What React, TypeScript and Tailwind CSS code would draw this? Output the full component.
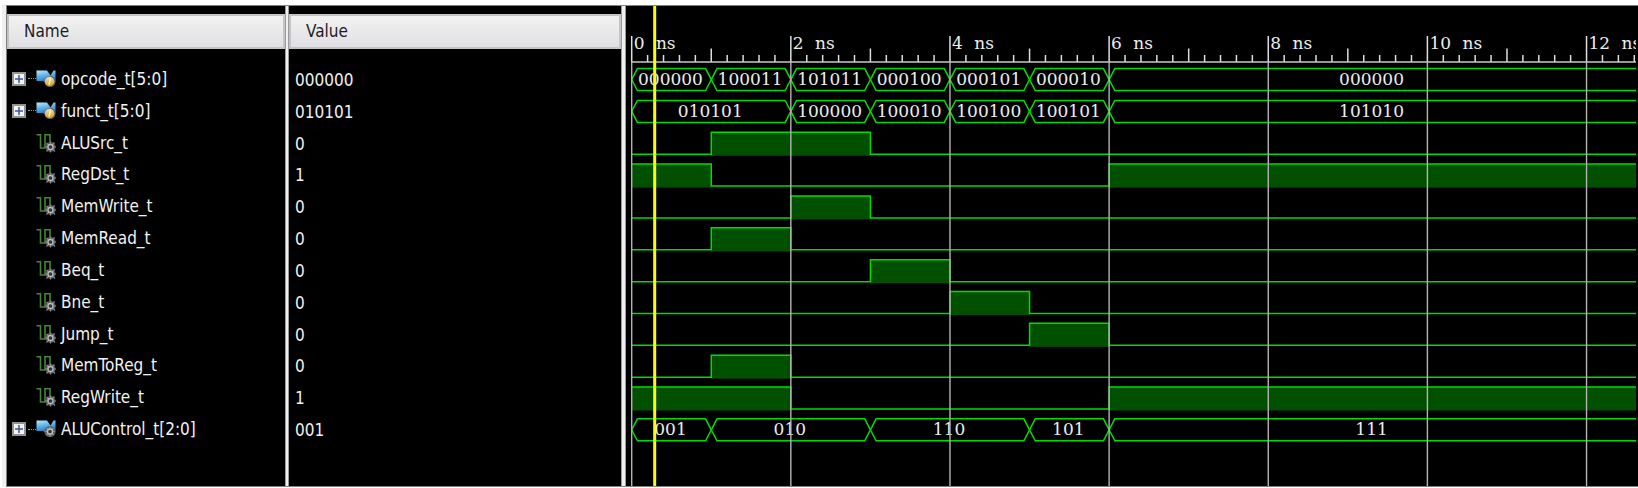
import React, { useLayoutEffect, useRef, useState } from "react";

type Segment = { from: number; to: number | null; value: string };
type Signal = {
  name: string;
  value: string;
  kind: "input-bus" | "output-bus" | "wire";
  segments?: Segment[];
  high?: [number, number | null][];
};

const signals: Signal[] = [
  {
    name: "opcode_t[5:0]",
    value: "000000",
    kind: "input-bus",
    segments: [
      { from: 0, to: 1, value: "000000" },
      { from: 1, to: 2, value: "100011" },
      { from: 2, to: 3, value: "101011" },
      { from: 3, to: 4, value: "000100" },
      { from: 4, to: 5, value: "000101" },
      { from: 5, to: 6, value: "000010" },
      { from: 6, to: null, value: "000000" },
    ],
  },
  {
    name: "funct_t[5:0]",
    value: "010101",
    kind: "input-bus",
    segments: [
      { from: 0, to: 2, value: "010101" },
      { from: 2, to: 3, value: "100000" },
      { from: 3, to: 4, value: "100010" },
      { from: 4, to: 5, value: "100100" },
      { from: 5, to: 6, value: "100101" },
      { from: 6, to: null, value: "101010" },
    ],
  },
  { name: "ALUSrc_t", value: "0", kind: "wire", high: [[1, 3]] },
  { name: "RegDst_t", value: "1", kind: "wire", high: [[0, 1], [6, null]] },
  { name: "MemWrite_t", value: "0", kind: "wire", high: [[2, 3]] },
  { name: "MemRead_t", value: "0", kind: "wire", high: [[1, 2]] },
  { name: "Beq_t", value: "0", kind: "wire", high: [[3, 4]] },
  { name: "Bne_t", value: "0", kind: "wire", high: [[4, 5]] },
  { name: "Jump_t", value: "0", kind: "wire", high: [[5, 6]] },
  { name: "MemToReg_t", value: "0", kind: "wire", high: [[1, 2]] },
  { name: "RegWrite_t", value: "1", kind: "wire", high: [[0, 2], [6, null]] },
  {
    name: "ALUControl_t[2:0]",
    value: "001",
    kind: "output-bus",
    segments: [
      { from: 0, to: 1, value: "001" },
      { from: 1, to: 3, value: "010" },
      { from: 3, to: 5, value: "110" },
      { from: 5, to: 6, value: "101" },
      { from: 6, to: null, value: "111" },
    ],
  },
];

const ORIGIN = 5.7;
const NS = 79.57;
const ROW_TOP = 62.6;
const ROW_PITCH = 31.84;
const WAVE_HEIGHT = 22;
const SLANT = 5.7;
const FAR = 4000;

const timeX = (ns: number | null) => (ns === null ? FAR : ORIGIN + ns * NS);

function BusIcon({ output }: { output: boolean }) {
  return (
    <svg width="20" height="18" viewBox="0 0 20 18" aria-hidden="true">
      <defs>
        <linearGradient id="bus-blue" x1="0" y1="0" x2="0.3" y2="1">
          <stop offset="0" stopColor="#c2e6fa" />
          <stop offset="0.45" stopColor="#62b6ee" />
          <stop offset="1" stopColor="#1c70b8" />
        </linearGradient>
        <linearGradient id="bus-gold" x1="0" y1="0" x2="0" y2="1">
          <stop offset="0" stopColor="#e9dfba" />
          <stop offset="1" stopColor="#dc9c14" />
        </linearGradient>
      </defs>
      <path d="M0.5 0.5H11L14.5 5.500L17.500 0.500H19.500V10.500L16 13H9.500L7 11H0.500Z" fill="url(#bus-blue)" />
      <circle cx="14" cy="11.500" r="5.600" fill="#5d6266" />
      {output ? (
        <>
          <path d="M10.500 8L17.500 15M17.500 8L10.500 15M14 6.500V17M9 11.500H19" stroke="#8e8e8e" strokeWidth="1.200" />
          <circle cx="14" cy="11.500" r="2.500" fill="#333" stroke="#c4c4c4" strokeWidth="1.300" />
        </>
      ) : (
        <>
          <circle cx="13.500" cy="11.500" r="4.700" fill="url(#bus-gold)" />
          <path d="M14.500 8.500L13 14.500" stroke="#fff1b8" strokeWidth="1.600" />
        </>
      )}
    </svg>
  );
}

function WireIcon() {
  return (
    <svg width="20" height="20" viewBox="0 0 20 20" aria-hidden="true" fill="none">
      <path d="M0.500 1.700H4.500V15H9V1.700H14V9" stroke="#47853a" strokeWidth="1.600" />
      <circle cx="14.500" cy="14" r="5" fill="#555" />
      <path d="M10.500 10L19 18.500M18.500 9.500L10.500 18.500M14.500 8.500V19.500M9 14H20" stroke="#868686" strokeWidth="1.200" />
      <circle cx="14.500" cy="14" r="2.500" fill="#333" stroke="#bbb" strokeWidth="1.300" />
    </svg>
  );
}

function SignalTable() {
  return (
    <table className="block shrink-0 border-l border-[#808080] bg-black pt-[8px] text-[17px] leading-5">
      <thead className="block">
        <tr className="grid grid-cols-[278px_4px_332px] text-left text-[#1c1c28]">
          <th scope="col" className="flex h-[35px] items-center border-2 border-[#c4c4c6] bg-linear-to-b from-[#f2f2f2] to-[#e0e0e2] pb-[1px] pl-[15px] font-normal">
            Name
          </th>
          <th scope="col" className="col-start-3 flex h-[35px] items-center border-2 border-[#c4c4c6] bg-linear-to-b from-[#f2f2f2] to-[#e0e0e2] pb-[1px] pl-[15px] font-normal">
            Value
          </th>
        </tr>
      </thead>
      <tbody className="mt-[14px] grid h-[382px] auto-rows-fr text-[#f2f2f2]">
        {signals.map((s) => (
          <tr key={s.name} className="grid grid-cols-[278px_4px_332px] items-center">
            <td className="flex items-center pl-[5px]">
              <span className="flex w-6 items-center">
                {s.kind !== "wire" && (
                  <>
                    <button type="button" aria-label={"Expand " + s.name} className="flex size-[14px] items-center justify-center border-2 border-[#929292] bg-[#f4f4f4]">
                      <svg width="8" height="8" viewBox="0 0 8 8" aria-hidden="true">
                        <path d="M0 4H8M4 0V8" stroke="#3c55a0" strokeWidth="1.500" />
                      </svg>
                    </button>
                    <span className="ml-[2px] w-2 border-t border-dotted border-[#999]" />
                  </>
                )}
              </span>
              {s.kind === "wire" ? <WireIcon /> : <BusIcon output={s.kind === "output-bus"} />}
              <span className="ml-[5px]">{s.name}</span>
            </td>
            <td className="col-start-3 pt-[2px] pl-[6px]">{s.value}</td>
          </tr>
        ))}
      </tbody>
    </table>
  );
}

function BusWave({ segments, top, width }: { segments: Segment[]; top: number; width: number }) {
  const bottom = top + WAVE_HEIGHT;
  const mid = top + WAVE_HEIGHT / 2;
  return (
    <g>
      {segments.map((s) => {
        const a = timeX(s.from);
        const b = timeX(s.to);
        const labelEnd = s.to === null ? width : b;
        return (
          <g key={s.from}>
            <path
              d={`M${a} ${mid}L${a + SLANT} ${top}H${b - SLANT}L${b} ${mid}L${b - SLANT} ${bottom}H${a + SLANT}Z`}
              fill="none"
              stroke="#00dc00"
              strokeWidth="1.500"
            />
            <text x={(a + labelEnd) / 2 - 1} y={mid + 5.5} textAnchor="middle" fill="#ededed">
              {s.value}
            </text>
          </g>
        );
      })}
    </g>
  );
}

function WireWave({ high, top }: { high: [number, number | null][]; top: number }) {
  const bottom = top + WAVE_HEIGHT;
  let line = high[0][0] === 0 ? "" : `M${ORIGIN} ${bottom}`;
  high.forEach(([from, to]) => {
    line += from === 0 ? `M${ORIGIN} ${top}` : `H${timeX(from)}V${top}`;
    line += `H${timeX(to)}`;
    if (to !== null) line += `V${bottom}`;
  });
  line += `H${FAR}`;
  return (
    <g>
      {high.map(([from, to]) => (
        <rect key={from} x={timeX(from)} y={top} width={timeX(to) - timeX(from)} height={WAVE_HEIGHT + 1.5} fill="#005000" />
      ))}
      <path d={line} fill="none" stroke="#00dc00" strokeWidth="1.500" />
    </g>
  );
}

function Waveform() {
  const box = useRef<HTMLDivElement>(null);
  const [width, setWidth] = useState(1010);

  useLayoutEffect(() => {
    const el = box.current;
    if (!el) return;
    const measure = () => setWidth(el.clientWidth);
    measure();
    const observer = new ResizeObserver(measure);
    observer.observe(el);
    return () => observer.disconnect();
  }, []);

  const visibleNs = Math.max(0, (width - ORIGIN) / NS);
  const ticks = Array.from({ length: Math.floor(visibleNs * 5) + 1 }, (_, i) => i);
  const majors = Array.from({ length: Math.floor(visibleNs / 2) + 1 }, (_, i) => i * 2);

  return (
    <div className="min-w-0 flex-1 bg-black pr-[2px]">
      <div ref={box} className="overflow-hidden">
        <svg width="100%" height="480" className="block font-['DejaVu_Serif',serif] text-[17px]" role="img" aria-label="Waveform">
          {ticks.map((i) => (
            <line
              key={i}
              x1={timeX(i / 5)}
              x2={timeX(i / 5)}
              y1={i % 10 === 0 ? 30 : i % 5 === 0 ? 42.5 : 49}
              y2="56"
              stroke="#dedede"
              strokeWidth="1.500"
            />
          ))}
          <line x1={ORIGIN} x2={FAR} y1="56" y2="56" stroke="#c8c8c8" strokeWidth="1.700" />
          {majors.map((ns) => (
            <text key={ns} x={timeX(ns) + 2} y="43" fill="#ededed">
              {ns} <tspan dx="6">ns</tspan>
            </text>
          ))}
          {signals.map((s, i) => {
            const top = ROW_TOP + i * ROW_PITCH;
            return s.segments ? (
              <BusWave key={s.name} segments={s.segments} top={top} width={width} />
            ) : (
              <WireWave key={s.name} high={s.high ?? []} top={top} />
            );
          })}
          {majors.map((ns) => (
            <line key={ns} x1={timeX(ns)} x2={timeX(ns)} y1="56" y2="480" stroke="#b4b4b4" strokeWidth="1.400" />
          ))}
          <line x1="28.700" x2="28.700" y1="0" y2="480" stroke="#ffff00" strokeWidth="3" />
        </svg>
      </div>
    </div>
  );
}

export default function App() {
  return (
    <main className="overflow-hidden bg-white pt-[5px] pl-[2px] font-['DejaVu_Sans_Condensed','DejaVu_Sans',sans-serif]">
      <div className="flex border-l-4 border-[#f0f0f0]">
        <div className="flex min-w-0 flex-1 border-y border-y-[#808080]">
          <div className="relative flex">
            <SignalTable />
            <div className="absolute inset-y-0 left-[279px] w-[4px] border-x border-[#9a9a9a] bg-[#f0f0f0]" />
          </div>
          <div className="w-[5px] shrink-0 border-x border-[#9a9a9a] bg-[#f0f0f0]" />
          <Waveform />
        </div>
      </div>
    </main>
  );
}
